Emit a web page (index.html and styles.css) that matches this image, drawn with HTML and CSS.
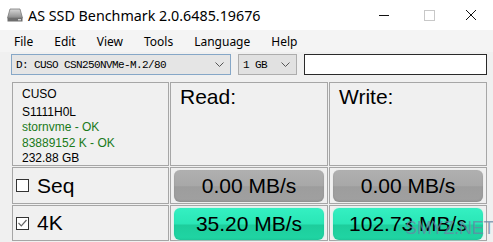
FILE: index.html
```html
<!DOCTYPE html>
<html lang="en">
<head>
  <meta charset="UTF-8">
  <title>AS SSD Benchmark 2.0.6485.19676</title>
  <link rel="stylesheet" href="styles.css">
</head>
<body>
  <div class="titlebar">
    <svg class="app-icon" width="16" height="14" viewBox="0 0 16 14">
      <defs>
        <linearGradient id="drv" x1="0" y1="0" x2="0" y2="1">
          <stop offset="0" stop-color="#d8d8d8"/>
          <stop offset="1" stop-color="#8a8a8a"/>
        </linearGradient>
      </defs>
      <path d="M3 1 H13 L15.5 10 H0.5 Z" fill="url(#drv)" stroke="#7a7a7a" stroke-width="0.8"/>
      <rect x="0.5" y="10" width="15" height="3.5" fill="#6e6e6e"/>
      <rect x="11" y="11" width="3" height="1.4" fill="#cfcfcf"/>
    </svg>
    <span class="title">AS SSD Benchmark 2.0.6485.19676</span>
    <div class="winbtns">
      <span class="wb wb-min"></span>
      <span class="wb wb-max"></span>
      <svg class="wb wb-close" width="10" height="10" viewBox="0 0 10 10">
        <path d="M0 0 L10 10 M10 0 L0 10" stroke="#111" stroke-width="1"/>
      </svg>
    </div>
  </div>

  <ul class="menubar">
    <li>File</li>
    <li>Edit</li>
    <li>View</li>
    <li>Tools</li>
    <li>Language</li>
    <li>Help</li>
  </ul>

  <div class="toolbar">
    <div class="combo combo-drive">
      <span>D: CUSO CSN250NVMe-M.2/80</span>
      <svg width="9" height="5" viewBox="0 0 9 5"><path d="M0.5 0.5 L4.5 4.5 L8.5 0.5" fill="none" stroke="#555"/></svg>
    </div>
    <div class="combo combo-size">
      <span>1 GB</span>
      <svg width="9" height="5" viewBox="0 0 9 5"><path d="M0.5 0.5 L4.5 4.5 L8.5 0.5" fill="none" stroke="#555"/></svg>
    </div>
    <div class="textbox"></div>
  </div>

  <div class="results">
    <div class="cell info">
      <div class="model">CUSO</div>
      <div>S1111H0L</div>
      <div class="ok">stornvme - OK</div>
      <div class="ok">83889152 K - OK</div>
      <div>232.88 GB</div>
    </div>
    <div class="cell head">Read:</div>
    <div class="cell head">Write:</div>

    <div class="cell label"><span class="check"></span>Seq</div>
    <div class="cell"><div class="bar">0.00 MB/s</div></div>
    <div class="cell"><div class="bar">0.00 MB/s</div></div>

    <div class="cell label"><span class="check checked">
      <svg width="9" height="8" viewBox="0 0 9 8"><path d="M0.5 4 L3.3 6.8 L8.5 1" fill="none" stroke="#666" stroke-width="1.2"/></svg>
    </span>4K</div>
    <div class="cell"><div class="bar green">35.20 MB/s</div></div>
    <div class="cell"><div class="bar green">102.73 MB/s</div></div>

    <div class="cell label"><span class="check"></span>4K-64Thrd</div>
    <div class="cell"><div class="bar"></div></div>
    <div class="cell"><div class="bar"></div></div>
  </div>

  <div class="watermark">SMYZ.NET</div>
</body>
</html>
```

FILE: styles.css
```css
body {
  margin: 0;
  width: 493px;
  height: 242px;
  overflow: hidden;
  position: relative;
  background-color: #f0f0f0;
  font-family: "Liberation Sans", Arial, sans-serif;
  color: #000;
}
.titlebar {
  height: 30px;
  background-color: #fff;
  display: flex;
  align-items: center;
}
.app-icon {
  margin-left: 7px;
  margin-right: 5px;
}
.title {
  font-family: "Noto Sans", sans-serif;
  font-size: 14.3px;
  color: #000;
}
.winbtns {
  margin-left: auto;
  display: flex;
  align-items: center;
  height: 30px;
}
.wb {
  display: block;
}
.wb-min {
  width: 10px;
  height: 1px;
  background-color: #111;
  margin-right: 35px;
}
.wb-max {
  width: 9px;
  height: 9px;
  border: 1px solid #c8c8c8;
  margin-right: 31px;
}
.wb-close {
  margin-right: 17px;
}
.menubar {
  list-style: none;
  margin: 0;
  padding: 0 0 0 7px;
  height: 22px;
  display: flex;
  align-items: center;
  background-color: #f4f4f4;
  font-family: "Noto Sans", sans-serif;
  font-size: 12px;
}
.menubar li {
  padding: 0 7px;
  margin-right: 7px;
}
.toolbar {
  display: flex;
  gap: 7px;
  margin: 2px 0 0 11px;
  height: 21px;
}
.combo {
  box-sizing: border-box;
  height: 21px;
  display: flex;
  align-items: center;
  justify-content: space-between;
  padding: 0 6px 0 4px;
  background-color: #e1e1e1;
  border: 1px solid #adadad;
  font-family: "Liberation Mono", monospace;
  font-size: 11px;
  letter-spacing: -0.6px;
}
.combo-drive {
  width: 220px;
  border-color: #86a7c7;
  background-color: #e5e5e5;
}
.combo-size {
  width: 59px;
}
.textbox {
  box-sizing: border-box;
  width: 183px;
  height: 21px;
  background-color: #fff;
  border: 1px solid #2a2a2a;
}
.results {
  display: grid;
  grid-template-columns: 157px 158px 158px;
  grid-template-rows: 84px 37px 36px 36px;
  gap: 1px;
  margin: 7px 0 0 12px;
}
.cell {
  box-sizing: border-box;
  border: 1px solid #a6a6a6;
  padding: 2px 3px 2px 3px;
}
.info {
  padding: 4px 0 0 9px;
  font-size: 12px;
  line-height: 15.5px;
}
.info .model {
  margin-bottom: 2px;
}
.info .ok {
  color: #1a7a1a;
}
.head {
  font-size: 21px;
  padding: 2px 0 0 9px;
}
.label {
  display: flex;
  align-items: center;
  font-size: 21px;
  padding: 0 0 0 3px;
}
.check {
  box-sizing: border-box;
  width: 13px;
  height: 13px;
  border: 1px solid #333;
  background-color: #fff;
  margin-right: 8px;
  display: flex;
  align-items: center;
  justify-content: center;
}
.bar {
  height: 32px;
  border-radius: 6px;
  display: flex;
  align-items: center;
  justify-content: center;
  font-size: 21px;
  background: linear-gradient(#b0b0b0, #a8a8a8 50%, #9d9d9d 52%, #a0a0a0);
  box-shadow: inset 0 -1px 2px rgba(0,0,0,0.12), 0 0 1px #c8c8c8;
}
.bar.green {
  background: linear-gradient(#34f0c2, #2ae6b6 50%, #1dcd9c 53%, #20d6a4);
  box-shadow: inset 0 -1px 2px rgba(0,0,0,0.08), 0 0 2px #9ff5dd;
}
.watermark {
  position: absolute;
  left: 405px;
  top: 218px;
  font-size: 18px;
  color: rgba(105, 135, 165, 0.75);
  letter-spacing: -0.2px;
}
```
